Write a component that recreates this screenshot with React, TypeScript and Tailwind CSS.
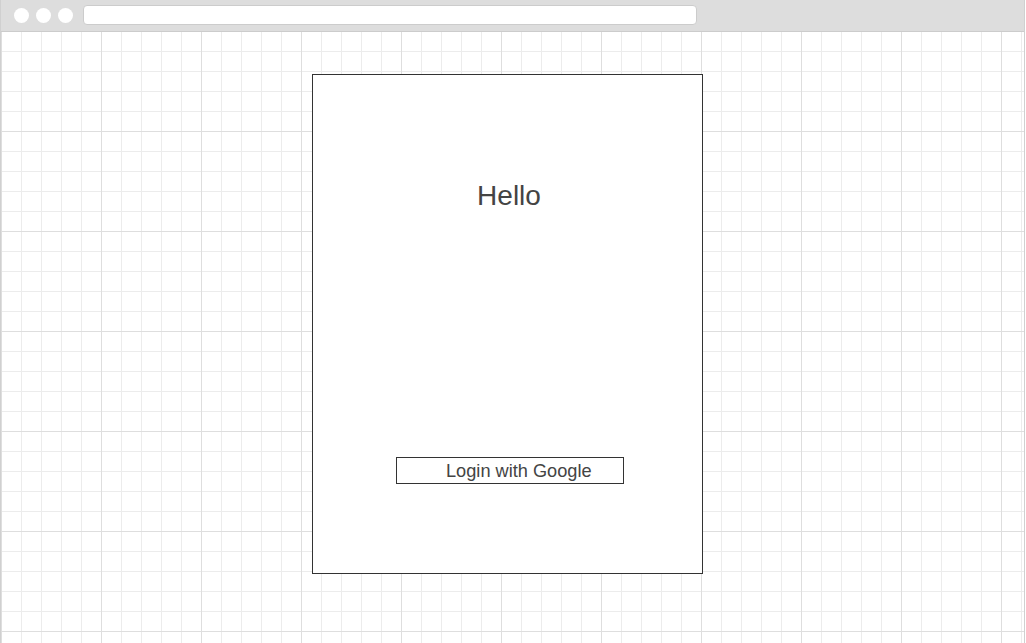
export default function App() {
  return (
    <div className="w-[1026px] h-[643px] overflow-hidden bg-white font-['Liberation_Sans',Arial,sans-serif]">
      <div className="w-[1025px] h-[643px] border-x border-[#d0d0d0] flex flex-col">
        {/* browser chrome */}
        <div className="h-[32px] shrink-0 bg-[#dddddd] border-b border-[#cccccc] flex items-center pl-[13px] pb-[1px]">
          <div className="flex gap-[7px]">
            <span className="w-[15px] h-[15px] rounded-full bg-white" />
            <span className="w-[15px] h-[15px] rounded-full bg-white" />
            <span className="w-[15px] h-[15px] rounded-full bg-white" />
          </div>
          <div className="ml-[10px] w-[614px] h-[20px] bg-white border border-[#cccccc] rounded-[4px]" />
        </div>

        {/* canvas */}
        <div className="flex-1 [background-image:linear-gradient(to_right,#dedede_1px,transparent_1px),linear-gradient(to_bottom,#dedede_1px,transparent_1px),linear-gradient(to_right,#ececec_1px,transparent_1px),linear-gradient(to_bottom,#ececec_1px,transparent_1px)] [background-size:100px_100px,100px_100px,20px_20px,20px_20px] [background-position:0_-1px,0_-1px,0_-1px,0_-1px]">
          <div className="ml-[311px] mt-[42px] w-[391px] h-[500px] bg-white border border-[#333333] flex flex-col">
            <h1 className="mt-[105px] pl-[3px] text-center text-[28px] leading-[32px] text-[#444444]">Hello</h1>
            <button className="mt-[245px] ml-[83px] w-[228px] h-[27px] border border-[#333333] text-left pl-[49px] pt-[1px] text-[18.2px] leading-[24px] text-[#444444]">
              Login with Google
            </button>
          </div>
        </div>
      </div>
    </div>
  )
}
